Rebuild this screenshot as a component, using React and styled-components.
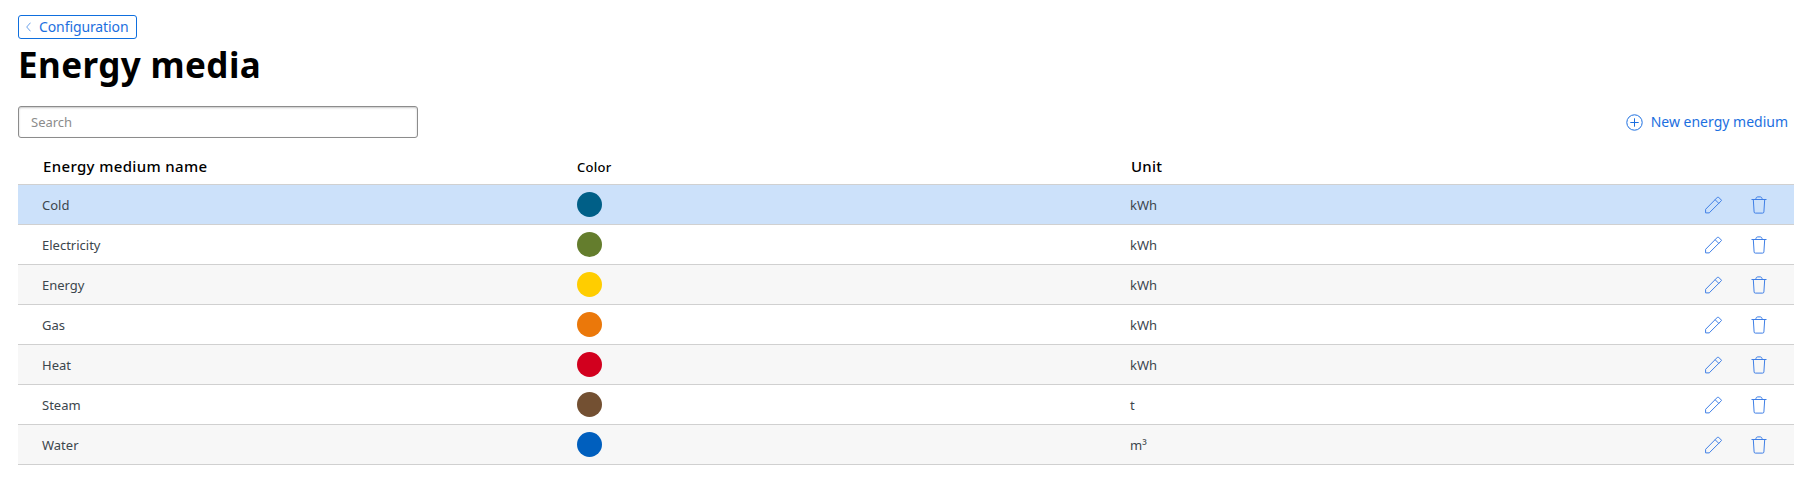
import React from 'react';
import styled, { createGlobalStyle } from 'styled-components';

const GlobalStyle = createGlobalStyle`
  *, *::before, *::after { box-sizing: border-box; }
  body {
    margin: 0;
    background: #fff;
    color: #3c464d;
    font-family: "Noto Sans", sans-serif;
    font-size: 13px;
  }
`;

const Page = styled.main`
  width: 1811px;
  height: 486px;
  padding: 15px 17px 0 18px;
  overflow: hidden;
`;

const BackButton = styled.button`
  display: flex;
  align-items: center;
  gap: 8px;
  width: 119px;
  height: 24px;
  padding: 0 0 0 7px;
  border: 1px solid #0f6fde;
  border-radius: 3px;
  background: #fff;
  color: #1c6fe0;
  font: 14px/20px "Noto Sans", sans-serif;
  letter-spacing: -0.1px;
`;

const Title = styled.h1`
  margin: 4px 0 0;
  color: #000;
  font-size: 35px;
  font-weight: 700;
  line-height: 44px;
  letter-spacing: 0.4px;
`;

const Toolbar = styled.div`
  display: flex;
  align-items: center;
  justify-content: space-between;
  height: 32px;
  margin-top: 19px;
  padding-right: 6px;
`;

const SearchInput = styled.input`
  width: 400px;
  height: 32px;
  padding: 0 12px;
  border: 1px solid #8c8c8c;
  border-radius: 3px;
  box-shadow: inset 0 1px 2px rgba(0, 0, 0, 0.22);
  font: 13px/20px "Noto Sans", sans-serif;
  &::placeholder { color: #8c8c8c; opacity: 1; }
`;

const CreateButton = styled.button`
  display: flex;
  align-items: center;
  gap: 8px;
  padding: 0;
  border: 0;
  background: none;
  color: #1c6fe0;
  font: 14px/20px "Noto Sans", sans-serif;
`;

const Table = styled.div`
  margin-top: 12px;
`;

const Row = styled.div`
  display: grid;
  grid-template-columns: 535px 553px 1fr auto;
  align-items: center;
  height: 40px;
  padding: 0 27px 0 24px;
  border-bottom: 1px solid #d0d0d0;
  background: ${({ $tone }) => $tone};
`;

const HeaderRow = styled(Row)`
  height: 35px;
  padding-bottom: 1px;
  align-items: baseline;
  align-content: center;
  color: #000;
  font-weight: 500;
`;

const HeaderCell = styled.span`
  padding-left: ${({ $inset }) => $inset || 0}px;
  font-size: ${({ $size }) => $size || 15}px;
  line-height: 20px;
  letter-spacing: ${({ $tracking }) => $tracking || 0}px;
`;

const Cell = styled.span`
  line-height: 20px;
`;

const Swatch = styled.span`
  width: 25px;
  height: 25px;
  border-radius: 50%;
  background: ${({ $color }) => $color};
`;

const Actions = styled.div`
  display: flex;
  gap: 28px;
`;

const IconButton = styled.button`
  display: flex;
  padding: 0;
  border: 0;
  background: none;
  color: #3f7fe6;
`;

const Icon = styled.svg`
  display: block;
  flex: none;
  fill: none;
  stroke: currentColor;
  stroke-width: 1;
`;

const media = [
  { name: 'Cold', color: '#005f87', unit: 'kWh' },
  { name: 'Electricity', color: '#647d2d', unit: 'kWh' },
  { name: 'Energy', color: '#ffcd00', unit: 'kWh' },
  { name: 'Gas', color: '#eb780a', unit: 'kWh' },
  { name: 'Heat', color: '#d2001e', unit: 'kWh' },
  { name: 'Steam', color: '#735032', unit: 't' },
  { name: 'Water', color: '#005fbe', unit: 'm³' },
];

const rowTone = (index) => (index === 0 ? '#cce1fa' : index % 2 ? '#fff' : '#f7f7f7');

const ChevronIcon = () => (
  <Icon width="5" height="10" viewBox="0 0 5 10" opacity="0.65">
    <path d="M4.5 .7 .7 5l3.8 4.3" />
  </Icon>
);

const PlusIcon = () => (
  <Icon width="17" height="17" viewBox="0 0 17 17">
    <circle cx="8.5" cy="8.5" r="7.7" />
    <path d="M8.5 4.3v8.4M4.3 8.5h8.4" />
  </Icon>
);

const PencilIcon = () => (
  <Icon width="18" height="18" viewBox="0 0 18 18">
    <path d="M.6 16.9v-3.6L12.6 1.1q.4-.4.8 0l2.9 2.9q.4.4 0 .8L4.2 16.9zM10.1 3.7l3.7 3.7" />
  </Icon>
);

const TrashIcon = () => (
  <Icon width="16" height="18" viewBox="0 0 16 18">
    <path d="M.5 3.5h15M4.8 3.3C5 1.6 5.6.9 6.8.9h2.4c1.2 0 1.8.7 2 2.4M2.3 3.5l.8 12.4q.1 1.2 1.2 1.2h7.4q1.1 0 1.2-1.2l.8-12.4" />
  </Icon>
);

export default function App() {
  return (
    <Page>
      <GlobalStyle />
      <BackButton><ChevronIcon />Configuration</BackButton>
      <Title>Energy media</Title>
      <Toolbar>
        <SearchInput placeholder="Search" aria-label="Search" />
        <CreateButton><PlusIcon />New energy medium</CreateButton>
      </Toolbar>
      <Table>
        <HeaderRow>
          <HeaderCell $inset={1} $tracking={0.35}>Energy medium name</HeaderCell>
          <HeaderCell $size={13} $tracking={0.25}>Color</HeaderCell>
          <HeaderCell $inset={1} $tracking={0.2}>Unit</HeaderCell>
        </HeaderRow>
        {media.map((medium, index) => (
          <Row key={medium.name} $tone={rowTone(index)}>
            <Cell>{medium.name}</Cell>
            <Swatch $color={medium.color} />
            <Cell>{medium.unit}</Cell>
            <Actions>
              <IconButton aria-label="Edit"><PencilIcon /></IconButton>
              <IconButton aria-label="Delete"><TrashIcon /></IconButton>
            </Actions>
          </Row>
        ))}
      </Table>
    </Page>
  );
}
